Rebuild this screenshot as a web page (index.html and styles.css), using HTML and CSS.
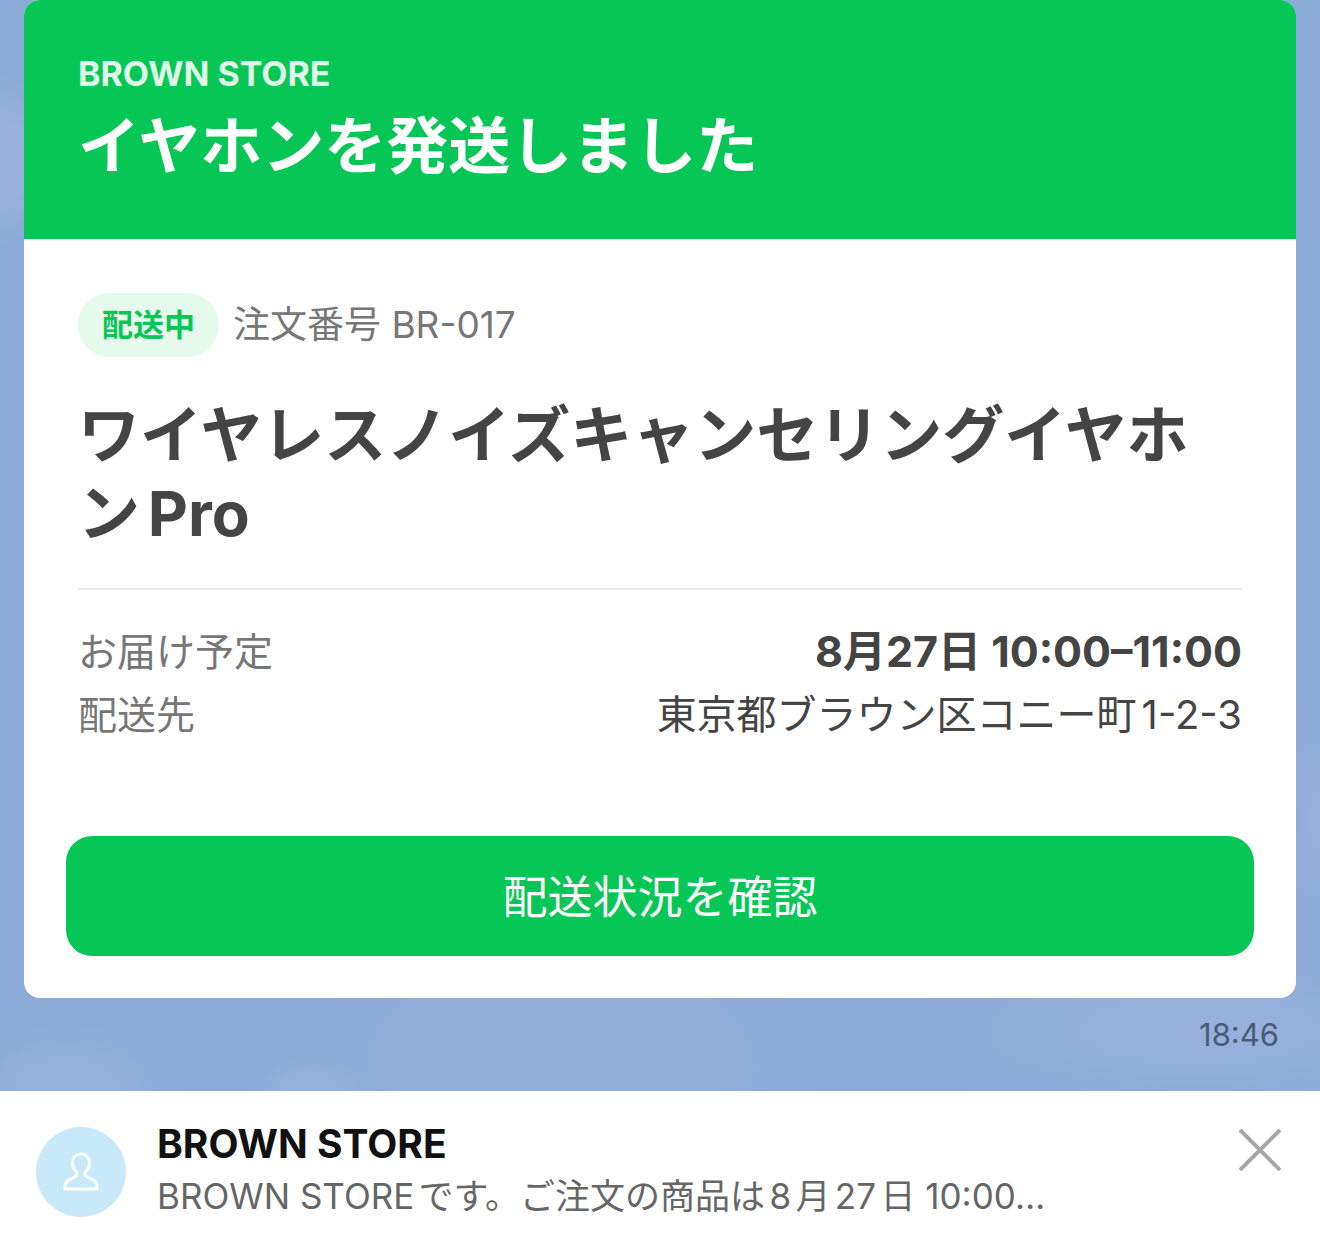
FILE: index.html
```
<!DOCTYPE html>
<html lang="ja">
<head>
    <meta charset="UTF-8">
    <meta name="viewport" content="width=device-width, initial-scale=1.0">
    <title>BROWN STORE</title>
    <link rel="stylesheet" href="styles.css">
</head>
<body>
    <main class="chat">
        <article class="card">
            <header class="card-header">
                <p class="store">BROWN STORE</p>
                <h1>イヤホンを発送しました</h1>
            </header>

            <div class="card-body">
                <div class="order">
                    <span class="status">配送中</span>
                    <span class="order-number">注文番号 BR-017</span>
                </div>
                <h2>ワイヤレスノイズキャンセリングイヤホンPro</h2>
                <dl class="details">
                    <div class="detail-row">
                        <dt>お届け予定</dt>
                        <dd class="date">8月27日 10:00–11:00</dd>
                    </div>
                    <div class="detail-row">
                        <dt>配送先</dt>
                        <dd>東京都ブラウン区コニー町1-2-3</dd>
                    </div>
                </dl>
            </div>

            <div class="card-footer">
                <button class="track-button" type="button">配送状況を確認</button>
            </div>
        </article>
        <time class="sent-time">18:46</time>
    </main>

    <aside class="notice">
        <div class="avatar">
            <svg width="36" height="40" viewBox="0 0 36 40" fill="none" stroke="#fff" stroke-width="3" stroke-linejoin="round">
                <path d="M18 2c-5 0-8.500 3.500-8.500 9 0 3.500 1.500 6.500 4 9 1 1.200.8 3.200-.5 4.200L5 28.500c-2.300 1.500-3 3.500-3 6V37h32v-2.500c0-2.500-.7-4.500-3-6l-8-4.300c-1.300-1-1.500-3-.5-4.200 2.500-2.500 4-5.500 4-9C26.500 5.500 23 2 18 2z"/>
            </svg>
        </div>
        <div class="notice-text">
            <p class="notice-name">BROWN STORE</p>
            <p class="notice-message">BROWN STOREです。ご注文の商品は8月27日 10:00…</p>
        </div>
        <button class="close-button" type="button" aria-label="閉じる">
            <svg width="42" height="42" viewBox="0 0 42 42" fill="none" stroke="#a6a6a6" stroke-width="4">
                <path d="M1 1l40 40M41 1L1 41"/>
            </svg>
        </button>
    </aside>
</body>
</html>
```
FILE: styles.css
```
* {
    margin: 0;
    padding: 0;
    box-sizing: border-box;
}

body {
    font-family: Inter, "Noto Sans CJK JP", sans-serif;
    color: #444;
    background: #fff;
    text-autospace: normal;
}

button {
    font-family: inherit;
    border: none;
    cursor: pointer;
}

/* Sky with soft clouds */
.chat {
    display: flex;
    flex-direction: column;
    padding: 0 24px 36px;
    background:
        radial-gradient(ellipse 120px 76px at 66px 100%, #96b0dc 40%, transparent 100%),
        radial-gradient(ellipse 60px 36px at 310px 100%, #96b0dc 50%, transparent 100%),
        radial-gradient(ellipse 260px 150px at 560px 1070px, #94aedb 60%, transparent 100%),
        radial-gradient(ellipse 320px 90px at 1200px 1030px, #97b1dc 20%, transparent 100%),
        radial-gradient(ellipse 60px 90px at 0 160px, #9ab2dd 40%, transparent 100%),
        radial-gradient(ellipse 60px 130px at 100% 820px, #96afdc 20%, transparent 100%),
        #8babd9;
}

.card {
    background: #fff;
    border-radius: 16px;
    overflow: hidden;
}

.card-header {
    display: flex;
    flex-direction: column;
    gap: 13px;
    padding: 54px 54px 52px;
    background: #06c755;
    color: #fff;
}

.store {
    font-size: 34px;
    line-height: 40px;
    font-weight: 700;
    color: #dff8e8;
}

h1,
h2 {
    font-size: 62px;
    font-weight: 700;
}

h1 {
    line-height: 80px;
}

h2 {
    line-height: 78px;
    margin-top: 40px;
}

.card-body {
    padding: 54px;
}

.order {
    display: flex;
    align-items: center;
    gap: 14px;
}

.status {
    padding: 0 24px;
    border-radius: 32px;
    background: #e6f9ed;
    color: #06c755;
    font-size: 31px;
    line-height: 64px;
    font-weight: 600;
}

.order-number {
    font-size: 37px;
    line-height: 64px;
    color: #777;
}

.details {
    margin-top: 35px;
    padding-top: 30px;
    border-top: 2px solid #ebebeb;
}

.detail-row {
    display: flex;
    justify-content: space-between;
    line-height: 63px;
}

.detail-row dt {
    font-size: 39px;
    color: #777;
}

.detail-row dd {
    font-size: 40px;
}

.detail-row .date {
    font-size: 43px;
    font-weight: 700;
    text-autospace: no-autospace;
}

.card-footer {
    padding: 36px 42px 42px;
}

.track-button {
    display: block;
    width: 100%;
    padding-top: 4px;
    border-radius: 26px;
    background: #06c755;
    color: #fff;
    font-size: 45px;
    line-height: 116px;
}

.sent-time {
    align-self: flex-end;
    margin-top: 17px;
    padding-right: 17px;
    font-size: 31px;
    line-height: 40px;
    color: #485b78;
}

.notice {
    display: flex;
    align-items: flex-start;
    padding: 27px 36px 32px;
}

.avatar {
    display: flex;
    align-items: center;
    justify-content: center;
    flex: none;
    width: 90px;
    height: 90px;
    margin-top: 9px;
    border-radius: 50%;
    background: #c8e9f9;
}

.notice-text {
    flex: 1;
    min-width: 0;
    margin-left: 31px;
    line-height: 52px;
}

.notice-name {
    font-size: 39px;
    font-weight: 700;
    color: #111;
}

.notice-message {
    font-size: 35px;
    color: #666;
    white-space: nowrap;
    overflow: hidden;
    text-overflow: ellipsis;
}

.close-button {
    display: flex;
    margin: 11px 3px 0 0;
    background: none;
}
```
